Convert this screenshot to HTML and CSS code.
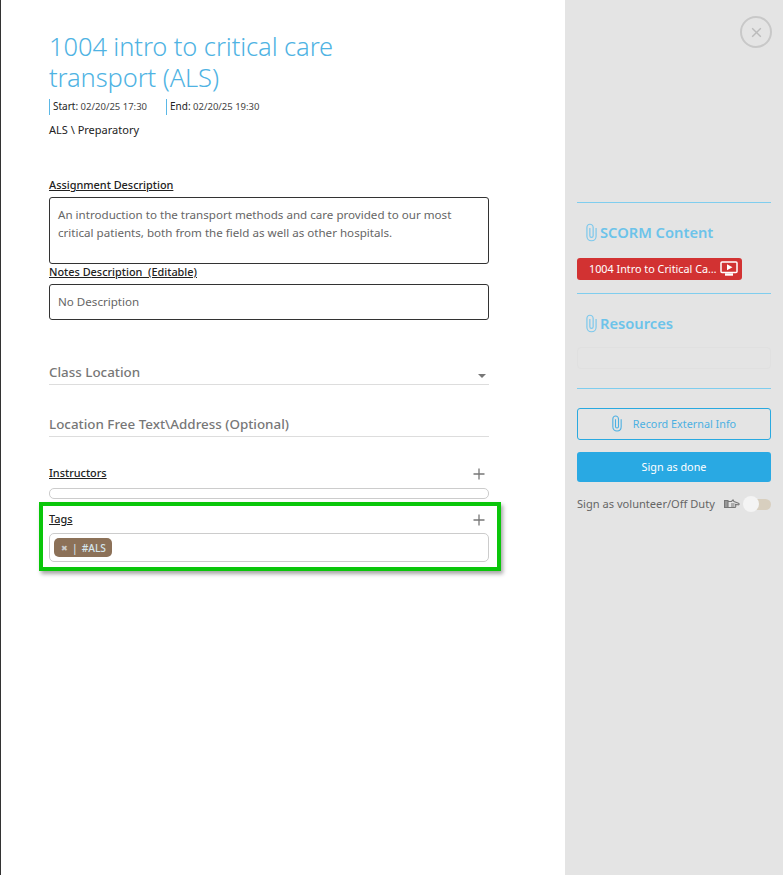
FILE: index.html
```html
<!DOCTYPE html>
<html lang="en">
<head>
<meta charset="utf-8">
<title>1004 intro to critical care transport (ALS)</title>
<link rel="stylesheet" href="styles.css">
</head>
<body>
<div class="modal">
  <main class="main">
    <h1 class="title">1004 intro to critical care transport (ALS)</h1>
    <div class="dates">
      <span class="date"><b class="date-k">Start:</b> 02/20/25 17:30</span>
      <span class="date"><b class="date-k">End:</b> 02/20/25 19:30</span>
    </div>
    <div class="path">ALS \ Preparatory</div>

    <div class="label label-desc">Assignment Description</div>
    <div class="box box-desc">An introduction to the transport methods and care provided to our most critical patients, both from the field as well as other hospitals.</div>
    <div class="label label-notes">Notes Description &nbsp;(Editable)</div>
    <div class="box box-notes">No Description</div>

    <div class="field field-loc">
      <span>Class Location</span>
      <span class="caret"></span>
    </div>
    <div class="field field-free"><span>Location Free Text\Address (Optional)</span></div>

    <div class="row row-inst">
      <span class="label">Instructors</span>
      <svg class="plus" viewBox="0 0 12 12"><path d="M6 0.5V11.5M0.5 6H11.5"/></svg>
    </div>
    <div class="chips chips-empty"></div>

    <section class="tags">
      <div class="row">
        <span class="label">Tags</span>
        <svg class="plus" viewBox="0 0 12 12"><path d="M6 0.5V11.5M0.5 6H11.5"/></svg>
      </div>
      <div class="chips chips-tags">
        <span class="tag"><span class="tag-x">✖</span><span class="tag-sep">|</span><span>#ALS</span></span>
      </div>
      <div class="highlight"></div>
    </section>
  </main>

  <aside class="side">
    <div class="close-wrap">
      <button class="close" aria-label="Close">
        <svg viewBox="0 0 14 14"><path d="M1.5 1.5L12.5 12.5M12.5 1.5L1.5 12.5"/></svg>
      </button>
    </div>

    <div class="sec sec-scorm">
      <h2 class="sec-title">
        <svg class="clip" viewBox="0 0 12 20"><path d="M11 5V14C11 17 8.8 19 6 19S1 17 1 14V4.5C1 2.5 2.5 1 4.3 1S7.8 2.5 7.8 4.5V13.5C7.8 14.6 7 15.3 6 15.3S4.2 14.6 4.2 13.5V5"/></svg>
        SCORM Content
      </h2>
      <div class="scorm-btn">
        <span class="scorm-text">1004 Intro to Critical Ca…</span>
        <svg class="screen" viewBox="0 0 18 15"><rect x="1" y="1" width="16" height="10.5" rx="1"/><path class="screen-foot" d="M5 13.5H13"/><path class="screen-play" d="M7 3.2L12.5 6.2L7 9.2Z"/></svg>
      </div>
    </div>

    <div class="sec sec-res">
      <h2 class="sec-title">
        <svg class="clip" viewBox="0 0 12 20"><path d="M11 5V14C11 17 8.8 19 6 19S1 17 1 14V4.5C1 2.5 2.5 1 4.3 1S7.8 2.5 7.8 4.5V13.5C7.8 14.6 7 15.3 6 15.3S4.2 14.6 4.2 13.5V5"/></svg>
        Resources
      </h2>
      <div class="res-box"></div>
    </div>

    <div class="sec sec-actions">
      <button class="btn btn-outline">
        <svg class="clip clip-btn" viewBox="0 0 12 20"><path d="M11 5V14C11 17 8.8 19 6 19S1 17 1 14V4.5C1 2.5 2.5 1 4.3 1S7.8 2.5 7.8 4.5V13.5C7.8 14.6 7 15.3 6 15.3S4.2 14.6 4.2 13.5V5"/></svg>
        Record External Info
      </button>
      <button class="btn btn-solid">Sign as done</button>
      <div class="vol">
        <span>Sign as volunteer/Off Duty</span>
        <svg class="hand" viewBox="0 0 16 10"><path class="hand-cuff" d="M0.5 1.5H4V8.5H0.5Z"/><path d="M4 2.5H7.5L9 1L10 2.6L14.5 4.2C15.6 4.7 15.3 6 14.2 5.8L11.5 5.5L11.8 7.2C11.8 8 11.2 8.5 10.5 8.5H4M7 5H10.5M7 7H10.5"/></svg>
        <span class="toggle"><span class="knob"></span></span>
      </div>
    </div>
  </aside>
</div>
</body>
</html>
```

FILE: styles.css
```css
* { box-sizing: border-box; }
html, body { margin: 0; height: 100%; }
body {
  background: #fff;
  font-family: "Noto Sans", "Open Sans", sans-serif;
  color: #222;
  overflow: hidden;
}
.modal {
  display: flex;
  height: 875px;
  border-left: 1px solid #333;
}
.main {
  width: 564px;
  padding: 31px 76px 0 48px;
  flex: none;
}
.title {
  margin: 0;
  font-size: 25.5px;
  line-height: 31px;
  font-weight: 300;
  color: #4fb3e3;
  width: 340px;
  letter-spacing: -0.1px;
}
.dates {
  display: flex;
  margin-top: 6px;
  height: 16px;
}
.date {
  width: 117px;
  padding-left: 3px;
  border-left: 1px solid #5bb8e6;
  font-size: 9.5px;
  line-height: 15px;
  color: #444;
  white-space: nowrap;
}
.date-k { font-weight: 400; color: #222; font-size: 10px; }
.path {
  margin-top: 7px;
  font-size: 11px;
  line-height: 15px;
  color: #222;
}
.label {
  font-size: 10.9px;
  line-height: 14px;
  font-weight: 500;
  color: #222;
  text-decoration: underline;
  display: block;
}
.label-desc { margin-top: 41px; }
.label-notes { margin-top: 1px; }
.box {
  border: 1px solid #333;
  border-radius: 3px;
  font-size: 11.6px;
  line-height: 18px;
  color: #666;
  padding: 8px 8px 0;
}
.box-desc { margin-top: 5px; height: 67px; }
.box-notes { margin-top: 5px; height: 36px; }
.field {
  display: flex;
  justify-content: space-between;
  align-items: flex-end;
  border-bottom: 1px solid #ddd;
  font-size: 13.4px;
  line-height: 18px;
  font-weight: 500;
  color: #777;
  height: 22px;
}
.field span:first-child { position: relative; top: -3px; }
.field-loc { margin-top: 43px; }
.field-free { margin-top: 30px; }
.caret {
  width: 0;
  height: 0;
  border: 4px solid transparent;
  border-top-color: #777;
  border-bottom-width: 0;
  margin: 0 3px 6px 0;
}
.row {
  display: flex;
  justify-content: space-between;
  align-items: center;
  height: 16px;
}
.row-inst { margin-top: 28px; }
.plus {
  width: 12px;
  height: 12px;
  fill: none;
  stroke: #777;
  stroke-width: 1.3;
  margin: 2px 4px 0 0;
}
.chips {
  border: 1px solid #ccc;
  border-radius: 5px;
}
.chips-empty { height: 11px; margin-top: 7px; }
.tags {
  position: relative;
  margin-top: 3px;
  padding-top: 9px;
}
.chips-tags {
  height: 29px;
  margin-top: 6px;
  padding: 4px;
  display: flex;
  align-items: flex-start;
}
.tag {
  display: inline-flex;
  align-items: center;
  height: 19px;
  padding: 0 6px 0 7px;
  background: #8c7158;
  border-radius: 5px;
  font-size: 10.2px;
  font-weight: 500;
  color: #d5e6ee;
}
.tag-x { font-size: 8px; color: #ccc; }
.tag-sep { margin: 0 4px 0 4px; }
.highlight {
  position: absolute;
  left: -10px;
  right: -12px;
  top: 0;
  height: 69px;
  border: 4px solid #0ac60a;
  box-shadow: 2px 3px 4px rgba(0, 0, 0, 0.35);
  pointer-events: none;
}
.side {
  flex: 1;
  background: #e4e4e4;
  padding: 16px 12px 0;
}
.close-wrap {
  display: flex;
  justify-content: flex-end;
  margin-right: -1px;
  height: 186px;
}
.close {
  width: 32px;
  height: 32px;
  padding: 0;
  border: 2px solid #c8c8c8;
  border-radius: 50%;
  background: transparent;
  display: flex;
  align-items: center;
  justify-content: center;
}
.close svg {
  width: 11px;
  height: 11px;
  fill: none;
  stroke: #bbb;
  stroke-width: 1.8;
}
.sec { border-top: 1px solid #7fcdee; }
.sec-scorm { height: 91px; padding-top: 19px; }
.sec-res { height: 95px; padding-top: 19px; }
.sec-title {
  margin: 0;
  display: flex;
  align-items: center;
  height: 20px;
  padding-left: 9px;
  gap: 3px;
  font-size: 14.7px;
  font-weight: 600;
  color: #6cc3ea;
}
.clip {
  width: 11px;
  height: 19px;
  fill: none;
  stroke: #7cc8ec;
  stroke-width: 1.3;
}
.scorm-btn {
  margin-top: 16px;
  width: 165px;
  height: 22px;
  background: #d23232;
  border-radius: 3px;
  display: flex;
  align-items: center;
  justify-content: space-between;
  padding: 0 4px 2px 12px;
  color: #fff;
  font-size: 10.8px;
}
.scorm-text { white-space: nowrap; }
.screen {
  width: 18px;
  height: 15px;
  flex: none;
  fill: none;
  stroke: #fff;
  stroke-width: 1.5;
}
.screen-foot { stroke-width: 2.4; }
.screen-play { fill: #fff; stroke: none; }
.res-box {
  margin-top: 14px;
  height: 22px;
  border: 1px solid #e0e0e0;
  border-radius: 4px;
}
.sec-actions { padding-top: 19px; }
.btn {
  display: flex;
  align-items: center;
  justify-content: center;
  width: 100%;
  border-radius: 3px;
  font-family: inherit;
  font-size: 10.8px;
  padding: 0 0 2px;
}
.btn-outline {
  height: 32px;
  border: 1px solid #29a9e0;
  background: transparent;
  color: #4cb0e2;
  gap: 11px;
}
.clip-btn { width: 10px; height: 17px; stroke: #4cb0e2; }
.btn-solid {
  margin-top: 12px;
  height: 30px;
  border: 0;
  background: #29a9e3;
  color: #fff;
}
.vol {
  display: flex;
  align-items: center;
  margin-top: 11px;
  height: 20px;
  font-size: 11.1px;
  color: #666;
  white-space: nowrap;
}
.hand {
  width: 16px;
  height: 10px;
  margin: 2px 0 0 9px;
  flex: none;
  fill: none;
  stroke: #777;
  stroke-width: 1.1;
}
.hand-cuff { fill: #999; }
.toggle {
  position: relative;
  width: 27px;
  height: 11px;
  margin: 3px 0 0 auto;
  background: #d8cfbf;
  border-radius: 6px;
}
.knob {
  position: absolute;
  left: -1px;
  top: -3px;
  width: 16px;
  height: 16px;
  border-radius: 50%;
  background: #f4f4f4;
}
```
